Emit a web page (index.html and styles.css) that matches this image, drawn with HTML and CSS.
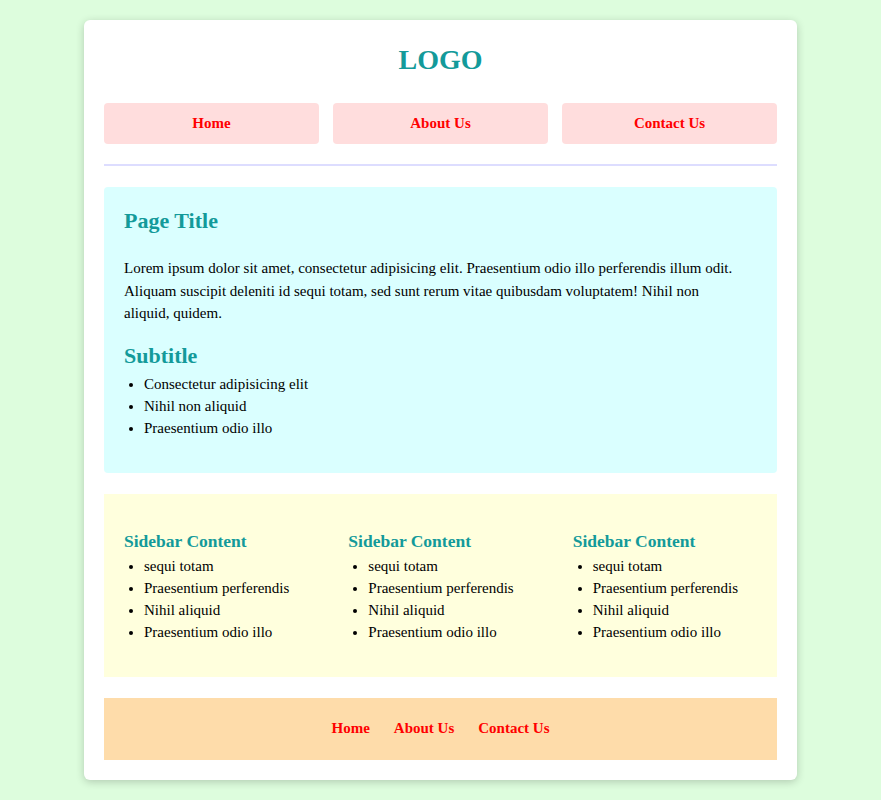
FILE: index.html
```html
<!DOCTYPE html>
<html lang="en">
<head>
    <meta charset="UTF-8">
    <meta name="viewport" content="width=device-width, initial-scale=1.0">
    <title>Layout</title>
    <link rel="stylesheet" href="styles.css">
</head>
<body>
    <div class="container">
        <header class="header">
            <h1 class="logo">LOGO</h1>
            <nav class="nav">
                <a href="#">Home</a>
                <a href="#">About Us</a>
                <a href="#">Contact Us</a>
            </nav>
        </header>

        <main class="main">
            <h2>Page Title</h2>
            <p>Lorem ipsum dolor sit amet, consectetur adipisicing elit. Praesentium odio illo perferendis illum odit. Aliquam suscipit deleniti id sequi totam, sed sunt rerum vitae quibusdam voluptatem! Nihil non<br>aliquid, quidem.</p>
            <h2 class="subtitle">Subtitle</h2>
            <ul>
                <li>Consectetur adipisicing elit</li>
                <li>Nihil non aliquid</li>
                <li>Praesentium odio illo</li>
            </ul>
        </main>

        <aside class="sidebar">
            <div class="sidebar-col">
                <h3>Sidebar Content</h3>
                <ul>
                    <li>sequi totam</li>
                    <li>Praesentium perferendis</li>
                    <li>Nihil aliquid</li>
                    <li>Praesentium odio illo</li>
                </ul>
            </div>
            <div class="sidebar-col">
                <h3>Sidebar Content</h3>
                <ul>
                    <li>sequi totam</li>
                    <li>Praesentium perferendis</li>
                    <li>Nihil aliquid</li>
                    <li>Praesentium odio illo</li>
                </ul>
            </div>
            <div class="sidebar-col">
                <h3>Sidebar Content</h3>
                <ul>
                    <li>sequi totam</li>
                    <li>Praesentium perferendis</li>
                    <li>Nihil aliquid</li>
                    <li>Praesentium odio illo</li>
                </ul>
            </div>
        </aside>

        <footer class="footer">
            <a href="#">Home</a>
            <a href="#">About Us</a>
            <a href="#">Contact Us</a>
        </footer>
    </div>
</body>
</html>
```

FILE: styles.css
```css
body {
    font-family: 'Liberation Serif', 'Times New Roman', serif;
    background-color: #ddfddd;
    margin: 0;
    padding: 20px 0;
    color: #000;
}

.container {
    width: 673px;
    margin: 0 auto;
    padding: 20px;
    background-color: #fff;
    border-radius: 6px;
    box-shadow: 0 2px 8px rgba(0, 0, 0, 0.2);
}

.header {
    padding-bottom: 20px;
    border-bottom: 2px solid #ddddff;
}

.logo {
    margin: 0;
    height: 40px;
    line-height: 40px;
    font-size: 28px;
    text-align: center;
    color: #139a9a;
}

.nav {
    display: flex;
    gap: 14px;
    margin-top: 23px;
}

.nav a {
    flex: 1;
    height: 41px;
    line-height: 41px;
    text-align: center;
    background-color: #ffdddd;
    border-radius: 4px;
    color: red;
    font-weight: bold;
    font-size: 15px;
    text-decoration: none;
}

.main {
    margin-top: 21px;
    padding: 20px;
    background-color: #daffff;
    border-radius: 4px;
    font-size: 15px;
    line-height: 22px;
}

.main h2 {
    margin: 0;
    font-size: 22px;
    line-height: 28px;
    color: #139a9a;
}

.main p {
    margin: 22px 0 17px;
    line-height: 22.5px;
}

.main ul {
    margin: 3px 0 14px;
    padding-left: 20px;
}

.sidebar {
    display: flex;
    margin-top: 21px;
    background-color: #ffffdd;
    font-size: 15px;
    line-height: 22px;
}

.sidebar-col {
    flex: 1;
    padding: 20px;
}

.sidebar-col h3 {
    margin: 15px 0 2px;
    font-size: 17.5px;
    line-height: 24px;
    color: #139a9a;
}

.sidebar-col ul {
    margin: 0 0 14px;
    padding-left: 20px;
}

.footer {
    display: flex;
    justify-content: center;
    gap: 24px;
    margin-top: 21px;
    height: 62px;
    align-items: center;
    background-color: #fedcaa;
}

.footer a {
    color: red;
    font-weight: bold;
    font-size: 15px;
    text-decoration: none;
}
```
